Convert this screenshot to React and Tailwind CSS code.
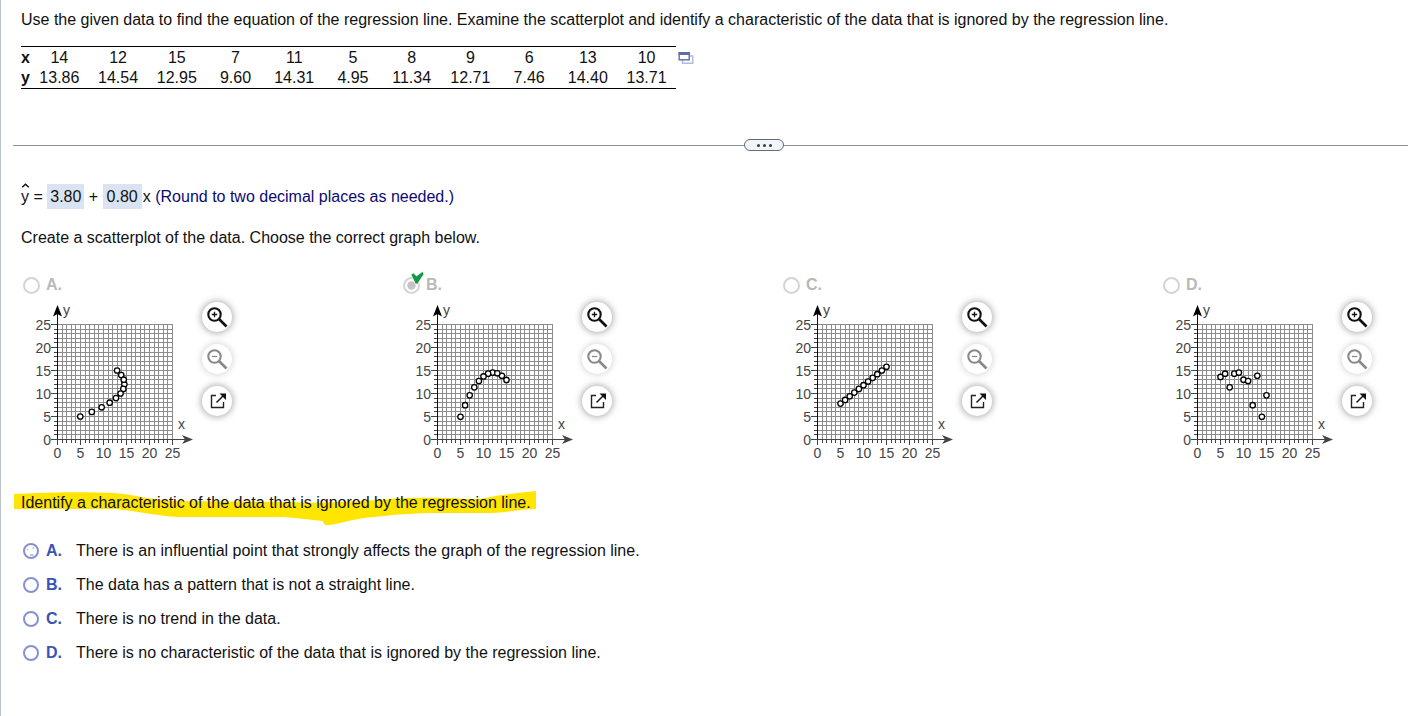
import React from "react";

const DATA = [
  [14, "13.86"], [12, "14.54"], [15, "12.95"], [7, "9.60"], [11, "14.31"], [5, "4.95"],
  [8, "11.34"], [9, "12.71"], [6, "7.46"], [13, "14.40"], [10, "13.71"],
];

const CURVE = DATA.map(([x, y]) => [x, Number(y)]);

const GRAPHS = [
  { letter: "A", points: CURVE.map(([x, y]) => [y, x]) },
  { letter: "B", points: CURVE, correct: true },
  { letter: "C", points: CURVE.map(([x]) => [x, 3.8 + 0.8 * x]) },
  {
    letter: "D",
    points: [
      [5, 13.6], [6, 14.3], [7, 11.34], [8, 14.31], [9, 14.54], [10, 13],
      [11, 12.71], [12, 7.46], [13, 13.86], [14, 4.95], [15, 9.6],
    ],
  },
];

const CHOICES = [
  ["A", "There is an influential point that strongly affects the graph of the regression line."],
  ["B", "The data has a pattern that is not a straight line."],
  ["C", "There is no trend in the data."],
  ["D", "There is no characteristic of the data that is ignored by the regression line."],
];

const UNITS = Array.from({ length: 26 }, (_, i) => i);
const MAJORS = [0, 5, 10, 15, 20, 25];
const px = (v) => 36.5 + Math.round(v * 4.6);
const py = (v) => 137.5 - Math.round(v * 4.6);

function Scatterplot({ letter, points }) {
  return (
    <svg width="180" height="164" viewBox="0 0 180 164" role="img" aria-label={`Scatterplot ${letter}`} className="shrink-0">
      <g stroke="#8c8c8c" strokeWidth="1">
        {UNITS.slice(1).map((u) => (
          <g key={u}>
            <line x1={px(u)} y1="22" x2={px(u)} y2="137" />
            <line x1="37" y1={py(u)} x2="152" y2={py(u)} />
          </g>
        ))}
      </g>
      <g stroke="#444" strokeWidth="1">
        {UNITS.map((u) => (
          <g key={u}>
            <line x1={px(u)} y1="137" x2={px(u)} y2={u % 5 ? 141 : 143} />
            <line x1={u % 5 ? 33 : 30} y1={py(u)} x2="36" y2={py(u)} />
          </g>
        ))}
        <line x1="36.5" y1="138" x2="36.5" y2="10" stroke="#111" />
        <line x1="36" y1="137.5" x2="164" y2="137.5" />
      </g>
      <path d="M36.5 3 L41 14.5 L36.5 12 L32 14.5Z" fill="#000" />
      <path d="M172 137.5 L161 142 L164 137.5 L161 133Z" fill="#444" />
      <g fill="#444" fontSize="14" fontFamily="'Liberation Sans', Arial, sans-serif">
        {MAJORS.map((m) => (
          <g key={m}>
            <text x={px(m)} y="156" textAnchor="middle">{m}</text>
            <text x="30" y={py(m) + 5} textAnchor="end">{m}</text>
          </g>
        ))}
        <text x="42" y="13">y</text>
        <text x="157" y="127">x</text>
      </g>
      <g fill="#fff" stroke="#000" strokeWidth="1.3">
        {points.map(([x, y]) => (
          <circle key={`${x},${y}`} cx={36.5 + x * 4.6} cy={137.5 - y * 4.6} r="2.7" />
        ))}
      </g>
    </svg>
  );
}

function Magnifier({ plus }) {
  return (
    <svg width="30" height="30" viewBox="0 0 30 30" fill="none" stroke={plus ? "#111" : "#8a8a8a"} aria-hidden="true">
      <circle cx="12.5" cy="12.5" r="6.2" strokeWidth="2.1" />
      <path d="M17 17 L24.5 24.5" strokeWidth="2.7" />
      <path d={plus ? "M9.8 12.5H15.2M12.5 9.8V15.2" : "M9.8 12.5H15.2"} strokeWidth="1.3" />
    </svg>
  );
}

function OpenIcon() {
  return (
    <svg width="30" height="30" viewBox="0 0 30 30" fill="none" stroke="#222" aria-hidden="true">
      <path d="M14 9.5H9.5V21.5H21.5V16" strokeWidth="1.4" />
      <path d="M14.5 16.5 L21 10" strokeWidth="1.6" />
      <path d="M17.5 7.5H24V14Z" fill="#111" stroke="none" />
    </svg>
  );
}

function RoundButton({ label, faded, children }) {
  return (
    <button
      type="button"
      aria-label={label}
      disabled={faded}
      className={
        faded
          ? "size-[30px] rounded-full bg-white shadow-[0_0_6px_1px_rgba(0,0,0,0.16)]"
          : "size-[30px] rounded-full bg-white shadow-[0_0_7px_1px_rgba(0,0,0,0.34)]"
      }
    >
      {children}
    </button>
  );
}

function GraphOption({ letter, points, correct }) {
  return (
    <div className="w-[212px] shrink-0">
      <label className="flex h-5 items-center pl-0.5 font-bold text-[#b9b9b9]">
        <span className="relative mr-1.5 flex size-[17px]">
          <input
            type="radio"
            name="graph"
            defaultChecked={correct}
            disabled
            className="size-[17px] appearance-none rounded-full border-2 border-[#d4d4d4] bg-white"
          />
          {correct && (
            <svg className="absolute left-0 -top-2" width="22" height="25" viewBox="0 0 22 25" aria-hidden="true">
              <circle cx="8.5" cy="16.5" r="4.2" fill="#c4c4c4" />
              <path d="M8 5.5 L10.5 4 L13.5 7 L19.5 2.5 L21 5 L14.5 15 L12.5 15Z" fill="#17964a" stroke="#fff" strokeWidth="0.6" />
            </svg>
          )}
        </span>
        {letter}.
      </label>
      <div className="mt-[7px] flex">
        <Scatterplot letter={letter} points={points} />
        <div className="flex flex-col gap-3 pl-px">
          <RoundButton label={`Zoom in on graph ${letter}`}><Magnifier plus /></RoundButton>
          <RoundButton label={`Zoom out of graph ${letter}`} faded><Magnifier /></RoundButton>
          <RoundButton label={`Open graph ${letter} in a new window`}><OpenIcon /></RoundButton>
        </div>
      </div>
    </div>
  );
}

export default function App() {
  return (
    <main className="min-h-screen overflow-x-hidden border-l border-[#bcc3cd] bg-white pt-2 pb-10 font-['Liberation_Sans',Arial,sans-serif] text-base leading-6 text-[#111]">
      <section className="pl-5">
        <p>
          Use the given data to find the equation of the regression line. Examine the scatterplot and identify a
          characteristic of the data that is ignored by the regression line.
        </p>
        <div className="mt-3.5 flex items-start gap-0.5">
          <div className="border-y border-black">
            <table className="w-[655px] table-fixed text-center leading-5">
              <tbody>
                <tr>
                  <th scope="row" className="w-[9px] px-0 pt-px pb-0">x</th>
                  {DATA.map(([x]) => <td key={x} className="px-0 pt-px pb-0">{x}</td>)}
                </tr>
                <tr>
                  <th scope="row" className="p-0">y</th>
                  {DATA.map(([x, y]) => <td key={x} className="p-0">{y}</td>)}
                </tr>
              </tbody>
            </table>
          </div>
          <button type="button" aria-label="Copy data" className="mt-1.5">
            <svg width="16" height="12" viewBox="0 0 16 12" fill="none" aria-hidden="true">
              <path d="M4.5 5.5V11.2H14.7V3.9H10" stroke="#b3bbdf" strokeWidth="1.5" />
              <rect x="1.2" y="1" width="10" height="6.8" fill="#fff" stroke="#5e6cae" strokeWidth="1.4" />
              <path d="M0.5 0H12V3H0.5Z" fill="#5e6cae" />
            </svg>
          </button>
        </div>
      </section>

      <div className="mt-[50px] flex items-center pl-3">
        <div className="flex-[731_1_0%] border-t border-[#8a8d9f]" />
        <button
          type="button"
          aria-label="Resize panels"
          className="flex h-3 w-10 items-center justify-center gap-[3px] rounded-full border border-[#666b7c] bg-[#f2f5fa]"
        >
          <span className="size-[3px] rounded-full bg-[#333a4a]" />
          <span className="size-[3px] rounded-full bg-[#333a4a]" />
          <span className="size-[3px] rounded-full bg-[#333a4a]" />
        </button>
        <div className="flex-[624_1_0%] border-t border-[#8a8d9f]" />
      </div>

      <section className="pl-5">
        <p className="mt-[33px] flex h-[25px] items-center whitespace-pre">
          <span className="relative">
            y
            <svg className="absolute -top-0.5 left-0" width="9" height="5" viewBox="0 0 9 5" fill="none" aria-hidden="true">
              <path d="M1.2 4.3 L4.5 1.2 L7.8 4.3" stroke="#111" strokeWidth="1.5" />
            </svg>
          </span>
          <span> = </span>
          <span className="bg-[#dae3f1] px-[3px] leading-[25px]">3.80</span>
          <span> + </span>
          <span className="bg-[#dae3f1] px-1 leading-[25px]">0.80</span>
          <span className="pl-px">x </span>
          <span className="text-[#0b0b73]">(Round to two decimal places as needed.)</span>
        </p>
        <p className="mt-[17px]">Create a scatterplot of the data. Choose the correct graph below.</p>

        <div className="mt-[25px] flex justify-between gap-4 pr-[35px]">
          {GRAPHS.map((g) => <GraphOption key={g.letter} {...g} />)}
        </div>

        <p className="relative isolate mt-[25px]">
          <svg className="absolute -top-px -left-[7px] -z-10" width="523" height="36" viewBox="14 489 523 36" aria-hidden="true">
            <path
              d="M14 493 L38 492 C65 491 90 491 113 492 C135 493 153 500 178 500 L290 501 C325 503 355 500 380 499 C405 496 430 497 450 497 C465 498 480 499 490 496 C505 493 520 492 536 490 V508 C520 508 505 512 490 512 H440 C415 512 390 514 375 516 C355 517 340 523 329 524 C324 525 323 522 323 520 C310 519 300 517 283 516 H178 C155 515 140 510 115 508 H14Z"
              fill="#ffe500"
            />
          </svg>
          Identify a characteristic of the data that is ignored by the regression line.
        </p>

        <fieldset aria-label="Characteristic ignored by the regression line" className="mt-6 flex flex-col gap-2.5">
          {CHOICES.map(([letter, text]) => (
            <label key={letter} className="flex items-center pl-0.5">
              <span className="relative mr-1.5 flex size-4">
                <input
                  type="radio"
                  name="characteristic"
                  className="size-4 appearance-none rounded-full border-2 border-[#8591d3] bg-white checked:bg-[#8591d3]"
                />
                {letter === "A" && (
                  <svg className="pointer-events-none absolute inset-0" width="16" height="16" viewBox="0 0 16 16" fill="none" aria-hidden="true">
                    <path d="M4 6.5H5M9.5 5.5L11 4.5M7 12H10.5" stroke="#a4addf" strokeWidth="1.3" />
                  </svg>
                )}
              </span>
              <span className="w-[31px] pl-px font-bold text-[#3a53b4]">{letter}.</span>
              <span>{text}</span>
            </label>
          ))}
        </fieldset>
      </section>
    </main>
  );
}
